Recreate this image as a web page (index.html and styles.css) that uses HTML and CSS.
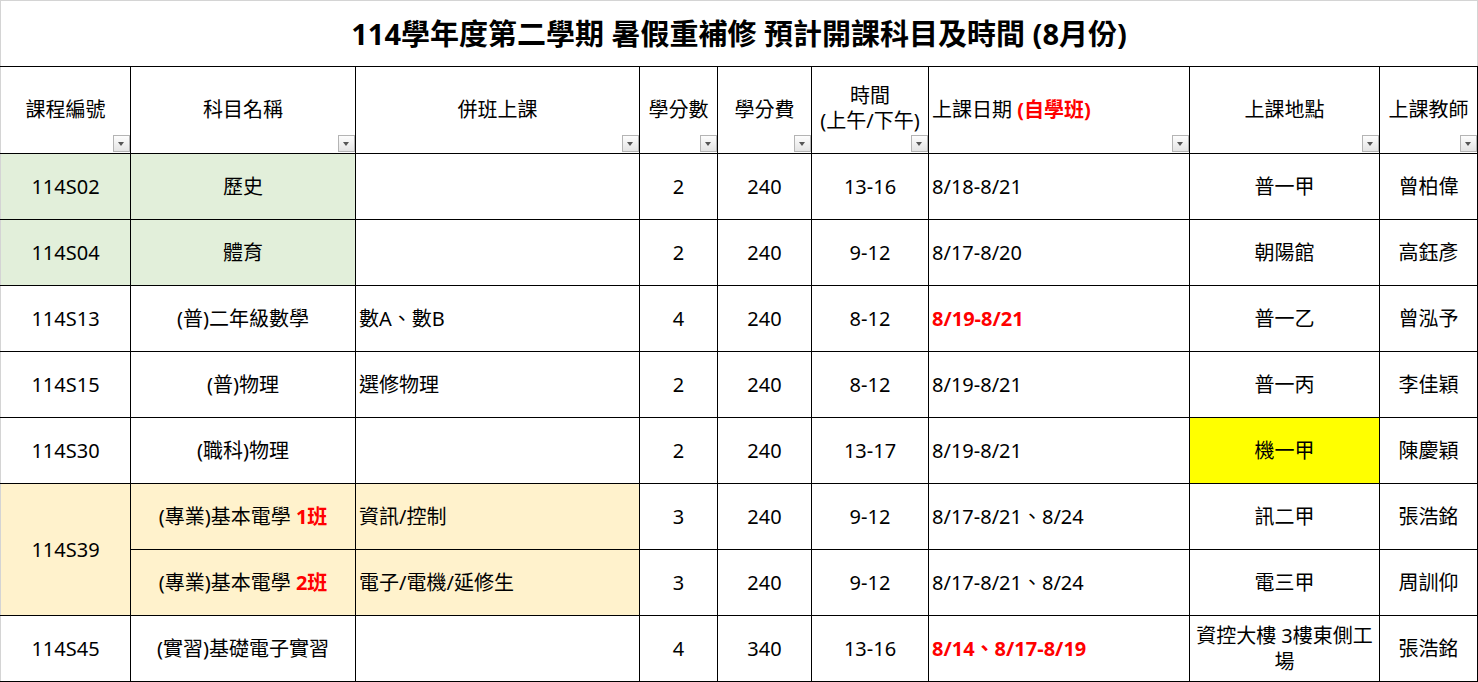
FILE: index.html
```html
<!DOCTYPE html>
<html lang="zh-Hant">
<head>
<meta charset="utf-8">
<title>114學年度第二學期 暑假重補修</title>
<link rel="stylesheet" href="styles.css">
</head>
<body>
<table class="sheet">
  <colgroup>
    <col class="w-id"><col class="w-name"><col class="w-merge"><col class="w-credit"><col class="w-fee"><col class="w-time"><col class="w-date"><col class="w-place"><col class="w-teacher">
  </colgroup>
  <tr class="row-title">
    <td colspan="9" class="title">114學年度第二學期 暑假重補修 預計開課科目及時間 (8月份)</td>
  </tr>
  <tr class="row-head">
    <th class="first">課程編號<span class="filter"></span></th>
    <th>科目名稱<span class="filter"></span></th>
    <th>併班上課<span class="filter"></span></th>
    <th>學分數<span class="filter"></span></th>
    <th>學分費<span class="filter"></span></th>
    <th class="two-line">時間<br>(上午/下午)<span class="filter"></span></th>
    <th class="left">上課日期 <span class="red">(自學班)</span><span class="filter"></span></th>
    <th>上課地點<span class="filter"></span></th>
    <th>上課教師<span class="filter"></span></th>
  </tr>
  <tr class="row-data">
    <td class="first green">114S02</td>
    <td class="green">歷史</td>
    <td class="left"></td>
    <td>2</td><td>240</td><td>13-16</td>
    <td class="left">8/18-8/21</td>
    <td>普一甲</td><td>曾柏偉</td>
  </tr>
  <tr class="row-data">
    <td class="first green">114S04</td>
    <td class="green">體育</td>
    <td class="left"></td>
    <td>2</td><td>240</td><td>9-12</td>
    <td class="left">8/17-8/20</td>
    <td>朝陽館</td><td>高鈺彥</td>
  </tr>
  <tr class="row-data">
    <td class="first">114S13</td>
    <td>(普)二年級數學</td>
    <td class="left">數A、數B</td>
    <td>4</td><td>240</td><td>8-12</td>
    <td class="left"><span class="red">8/19-8/21</span></td>
    <td>普一乙</td><td>曾泓予</td>
  </tr>
  <tr class="row-data">
    <td class="first">114S15</td>
    <td>(普)物理</td>
    <td class="left">選修物理</td>
    <td>2</td><td>240</td><td>8-12</td>
    <td class="left">8/19-8/21</td>
    <td>普一丙</td><td>李佳穎</td>
  </tr>
  <tr class="row-data">
    <td class="first">114S30</td>
    <td>(職科)物理</td>
    <td class="left"></td>
    <td>2</td><td>240</td><td>13-17</td>
    <td class="left">8/19-8/21</td>
    <td class="yellow">機一甲</td><td>陳慶穎</td>
  </tr>
  <tr class="row-data">
    <td class="first cream" rowspan="2">114S39</td>
    <td class="cream">(專業)基本電學 <span class="red">1班</span></td>
    <td class="left cream">資訊/控制</td>
    <td>3</td><td>240</td><td>9-12</td>
    <td class="left">8/17-8/21、8/24</td>
    <td>訊二甲</td><td>張浩銘</td>
  </tr>
  <tr class="row-data">
    <td class="cream">(專業)基本電學 <span class="red">2班</span></td>
    <td class="left cream">電子/電機/延修生</td>
    <td>3</td><td>240</td><td>9-12</td>
    <td class="left">8/17-8/21、8/24</td>
    <td>電三甲</td><td>周訓仰</td>
  </tr>
  <tr class="row-data">
    <td class="first">114S45</td>
    <td>(實習)基礎電子實習</td>
    <td class="left"></td>
    <td>4</td><td>340</td><td>13-16</td>
    <td class="left"><span class="red">8/14、8/17-8/19</span></td>
    <td>資控大樓 3樓東側工場</td><td>張浩銘</td>
  </tr>
</table>
</body>
</html>
```

FILE: styles.css
```css
html, body {
  margin: 0;
  padding: 0;
  background: #ffffff;
}

body {
  font-family: "Noto Sans", "Noto Sans CJK TC", sans-serif;
  color: #000000;
}

.sheet {
  border-collapse: collapse;
  table-layout: fixed;
  width: 1478px;
}

.w-id { width: 130px; }
.w-name { width: 225px; }
.w-merge { width: 284px; }
.w-credit { width: 78px; }
.w-fee { width: 94px; }
.w-time { width: 117px; }
.w-date { width: 261px; }
.w-place { width: 190px; }
.w-teacher { width: 98px; }

.sheet td,
.sheet th {
  border: 1px solid #000000;
  padding: 0 3px;
  font-size: 20px;
  font-weight: 400;
  line-height: 26px;
  text-align: center;
  vertical-align: middle;
  overflow: hidden;
}

.sheet th {
  position: relative;
}

.sheet .two-line {
  line-height: 25px;
  padding-bottom: 4px;
}

.sheet .first {
  border-left-color: #d4d4d4;
}

.row-title { height: 66px; }
.row-head { height: 87px; }
.row-data { height: 66px; }

.sheet .title {
  border: 1px solid #d4d4d4;
  border-bottom-color: #000000;
  font-size: 29px;
  font-weight: 700;
  line-height: 36px;
  padding: 0;
}

.sheet .left {
  text-align: left;
}

.red {
  color: #ff0000;
  font-weight: 700;
}

.green { background: #e2efda; }
.cream { background: #fff2cc; }
.yellow { background: #ffff00; }

.filter {
  position: absolute;
  right: 0;
  bottom: 1px;
  width: 17px;
  height: 17px;
  box-sizing: border-box;
  border: 1px solid #b4b4b4;
  background: linear-gradient(#fdfdfd, #e4e4e4);
}

.filter::after {
  content: "";
  position: absolute;
  left: 4px;
  top: 6px;
  width: 0;
  height: 0;
  border-left: 3.5px solid transparent;
  border-right: 3.5px solid transparent;
  border-top: 4px solid #555555;
}
```
